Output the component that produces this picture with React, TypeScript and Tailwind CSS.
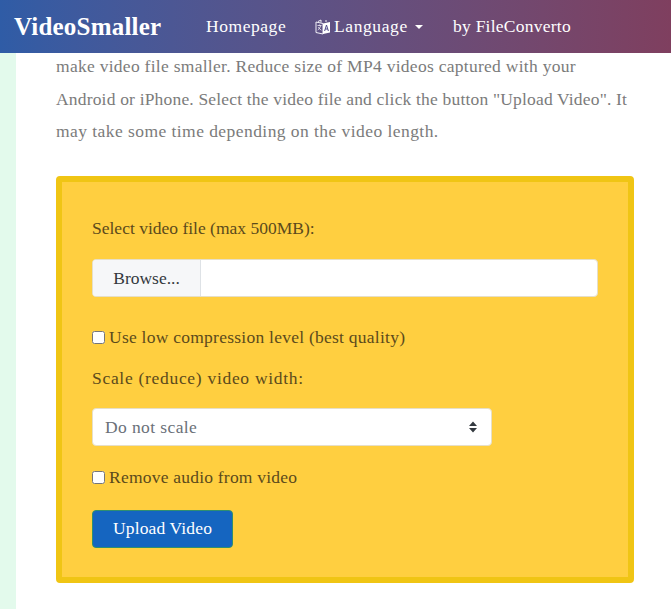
import React from "react";

const serif = { fontFamily: '"Liberation Serif", serif' };

function LanguageIcon() {
  return (
    <svg viewBox="0 0 16 16" className="h-[16px] w-[16px]" fill="none">
      <path d="M1 3 L8 4.5 V15 L1 13.5 Z" stroke="#f2f0f8" strokeWidth="1" />
      <path d="M8 4.5 L15 3 V13.5 L8 15 Z" fill="#ffffff" />
      <path d="M3 2.5 L6 1 V3.5 M11 1 V3" stroke="#f2f0f8" strokeWidth="1" />
      <path d="M2.5 6.5 H6.5 M4.4 5.5 V6.5 M5.7 6.5 C5.2 8.5 4.2 10 2.8 11 M3.4 8 C4 9.5 5 10.6 6.4 11.2" stroke="#f2f0f8" strokeWidth="0.8" />
      <path d="M9.6 12 L11.5 6 L13.4 12 M10.3 10 H12.7" stroke="#4f4a8a" strokeWidth="1" />
    </svg>
  );
}

export default function App() {
  return (
    <div className="h-[609px] overflow-hidden bg-white text-[17.5px]" style={serif}>
      {/* Navbar */}
      <nav className="flex h-[53px] items-center bg-gradient-to-r from-[#2f5ca6] to-[#7f3f5f] pl-[14px] text-white">
        <span className="w-[192px] text-[25px] font-bold tracking-[0.2px]">VideoSmaller</span>
        <span className="w-[109px] tracking-[0.55px]">Homepage</span>
        <span className="flex w-[138px] items-center gap-[3px] tracking-[0.6px]">
          <LanguageIcon />
          Language
          <span className="ml-[4px] h-0 w-0 border-x-[4px] border-t-[4px] border-x-transparent border-t-white" />
        </span>
        <span className="tracking-[0.25px]">by FileConverto</span>
      </nav>

      <div className="flex">
        <div className="h-[556px] w-[16px] bg-[#e3faec]" />
        <main className="w-[618px] pl-[40px]">
          <p className="-mt-[3px] whitespace-nowrap leading-[32.5px] text-[#7b7b7b]">
            <span className="block tracking-[0.28px]">make video file smaller. Reduce size of MP4 videos captured with your</span>
            <span className="block tracking-[0.18px]">Android or iPhone. Select the video file and click the button "Upload Video". It</span>
            <span className="block tracking-[0.44px]">may take some time depending on the video length.</span>
          </p>

          {/* Upload form */}
          <form className="mt-[28px] h-[407px] w-[578px] rounded-[4px] border-[6px] border-[#f0c514] bg-[#ffcf40] px-[30px] text-[#5b4a1c]">
            <p className="mt-[34px] leading-[24px]">Select video file (max 500MB):</p>

            <div className="mt-[19px] flex h-[38px] w-[506px] items-center overflow-hidden rounded-[4px] border border-[#e6dfc8] bg-white text-[#33383d]">
              <span className="flex h-full w-[108px] items-center justify-center border-r border-[#dee2e6] bg-[#f6f7f9] pt-[1px]">Browse...</span>
            </div>

            <label className="mt-[29px] flex h-[24px] items-center gap-[4px]">
              <input type="checkbox" className="h-[13px] w-[13px]" />
              <span className="tracking-[0.25px]">Use low compression level (best quality)</span>
            </label>

            <p className="mt-[16px] leading-[24px] tracking-[0.7px]">Scale (reduce) video width:</p>

            <div className="mt-[18px] flex h-[38px] w-[400px] items-center justify-between rounded-[4px] border border-[#e6dfc8] bg-white pl-[12px] pr-[14px] text-[#6a7078]">
              <span className="pt-[1px] tracking-[0.4px]">Do not scale</span>
              <svg viewBox="0 0 8 12" className="h-[12px] w-[8px]" fill="#343a40">
                <path d="M4 0.5 L8 5 H0 Z M0 7 H8 L4 11.5 Z" />
              </svg>
            </div>

            <label className="mt-[20px] flex h-[24px] items-center gap-[4px]">
              <input type="checkbox" className="h-[13px] w-[13px]" />
              <span className="tracking-[0.22px]">Remove audio from video</span>
            </label>

            <div className="mt-[20px] flex h-[38px] w-[141px] items-center justify-center rounded-[4px] border border-[#2f8f6f] bg-[#1565c0] tracking-[0.15px] text-white">
              Upload Video
            </div>
          </form>
        </main>
      </div>
    </div>
  );
}
